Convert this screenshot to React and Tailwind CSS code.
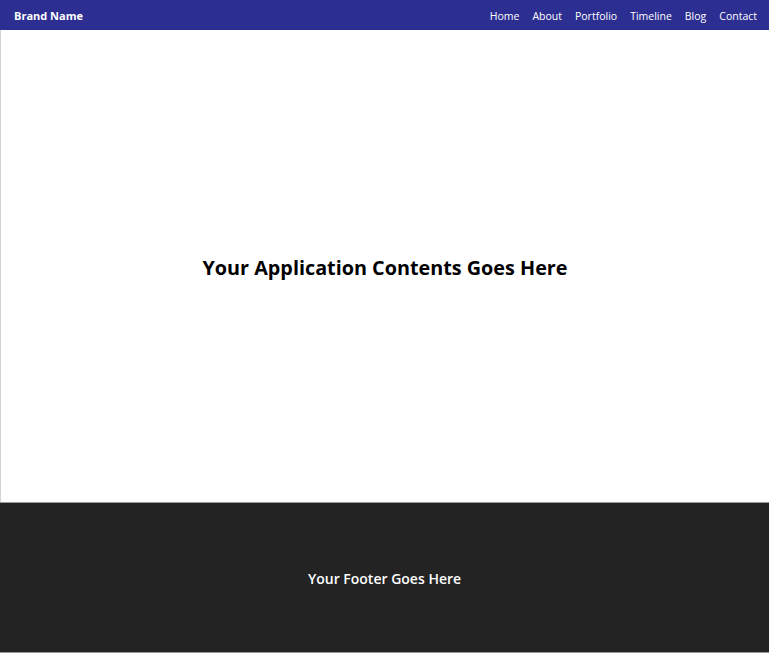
const links = ["Home", "About", "Portfolio", "Timeline", "Blog", "Contact"]

const App = () => {
    return (
        <div className="min-h-[653px] flex flex-col font-['Open_Sans',sans-serif]">
            <header className="h-[30px] bg-[#2d2e92] flex items-center justify-between pl-[14px] pr-[12px] pt-[3px] text-white">
                <span className="text-[11px] font-bold">Brand Name</span>
                <nav className="flex items-center gap-[13px] text-[10.5px]">
                    {links.map((l) => (
                        <a key={l} href="#" className="text-white">{l}</a>
                    ))}
                </nav>
            </header>
            <main className="h-[472px] flex items-center justify-center pt-[4px] border-l border-[#d4d4d4] bg-white">
                <h1 className="text-[19.8px] font-bold text-black">Your Application Contents Goes Here</h1>
            </main>
            <footer className="h-[151px] flex items-center justify-center pt-[1px] bg-[#232323] border-t border-[#999999] border-b border-b-[#999999]">
                <p className="text-[14px] font-semibold text-white">Your Footer Goes Here</p>
            </footer>
        </div>
    )
}

export default App
